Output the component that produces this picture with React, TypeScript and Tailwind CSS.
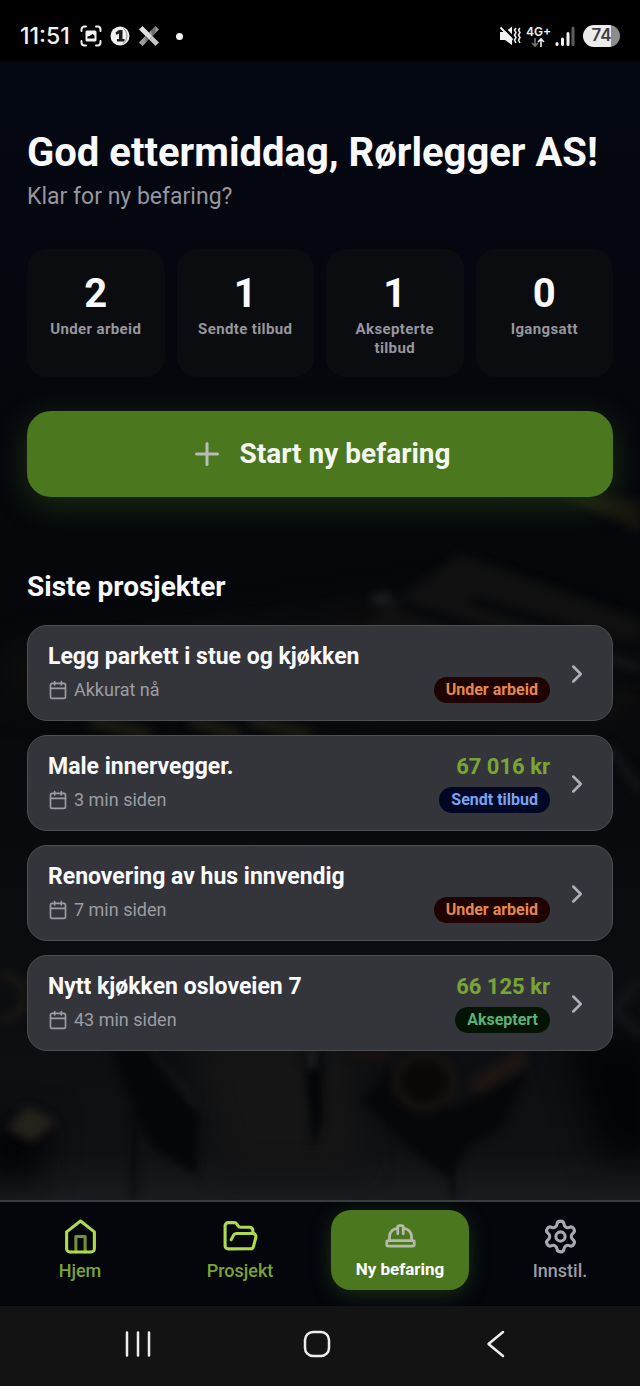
import { Calendar, ChevronRight, FolderOpen, HardHat, Plus, Settings } from "lucide-react";

const stats = [
  { value: 2, label: "Under arbeid" },
  { value: 1, label: "Sendte tilbud" },
  { value: 1, label: "Aksepterte tilbud" },
  { value: 0, label: "Igangsatt" },
];

const badges = {
  progress: { text: "Under arbeid", style: "bg-[#1f0303] text-[#e5894b]" },
  sent: { text: "Sendt tilbud", style: "bg-[#020824] text-[#78a4f4]" },
  accepted: { text: "Akseptert", style: "bg-[#031405] text-[#5cb176]" },
};

const projects = [
  { title: "Legg parkett i stue og kjøkken", time: "Akkurat nå", price: "", badge: badges.progress },
  { title: "Male innervegger.", time: "3 min siden", price: "67 016 kr", badge: badges.sent },
  { title: "Renovering av hus innvendig", time: "7 min siden", price: "", badge: badges.progress },
  { title: "Nytt kjøkken osloveien 7", time: "43 min siden", price: "66 125 kr", badge: badges.accepted },
];

function StatusBar() {
  return (
    <div className="flex h-[62px] items-center justify-between bg-black pt-[10px] pr-5 pl-5 text-[#f2f2f2]">
      <div className="flex items-center gap-2">
        <span className="mr-0.5 font-[Inter] text-[23px] leading-6 font-medium">11:51</span>
        <svg className="size-[22px]" viewBox="0 0 22 22" fill="none" stroke="currentColor" strokeWidth="2" strokeLinecap="round">
          <path d="M1.5 6V4.5a3 3 0 0 1 3-3H6M16 1.5h1.5a3 3 0 0 1 3 3V6M20.5 16v1.5a3 3 0 0 1-3 3H16M6 20.5H4.5a3 3 0 0 1-3-3V16" />
          <rect x="5.500" y="5.500" width="11" height="11" rx="1.500" fill="currentColor" stroke="none" />
          <path d="M7.500 13.500v-2l2-.5 3-2 2 1.500v3z" fill="#000" stroke="none" />
        </svg>
        <svg className="size-5" viewBox="0 0 20 20">
          <circle cx="10" cy="10" r="9.500" fill="#f2f2f2" />
          <path d="M5.500 6.500 9 4h3.500v9h2v2.500H7V13h2V7.500L6.500 9z" fill="#1c1c1c" />
          <path d="M13.500 2.500c5 4 4.500 12-1 15.500" fill="none" stroke="#8a8a8a" strokeWidth="1" />
        </svg>
        <svg className="size-[22px]" viewBox="0 0 22 22">
          <path d="M1 4.500 4.500 1 14.500 11 11 14.500z" fill="#e0e0e0" />
          <path d="M17.500 1 21 4.500 14.500 11 11 7.500z" fill="#9c9c9c" />
          <path d="M13 5.500 17.500 1v7l-3 3z" fill="#6e6e6e" />
          <path d="M7.500 11 11 14.500 4.500 21 1 17.500z" fill="#707070" />
          <path d="m1 17.500 6.500-6.500v7l-3 3z" fill="#9a9a9a" />
          <path d="M14.500 11 21 17.500 17.500 21 11 14.500z" fill="#c4c4c4" />
        </svg>
        <span className="ml-2 size-[7px] rounded-full bg-[#f2f2f2]" />
      </div>

      <div className="flex items-center gap-1">
        <svg className="h-[22px] w-6" viewBox="0 0 24 22" fill="none" stroke="currentColor">
          <path d="M2 7h5l7-5.500v18.500L7 15H2z" fill="currentColor" stroke="none" />
          <path d="M4 1 16 13" stroke="#000" strokeWidth="2.500" />
          <path d="m2.500 2.500 12 12.500" strokeWidth="2" />
          <path d="m18 3-1.500 2L18 7.500 16.500 10l1.500 2.500-1.500 2.500 1.500 3M22 3l-1.500 2L22 7.500 20.500 10l1.500 2.500-1.500 2.500 1.500 3" strokeWidth="1.500" />
        </svg>
        <div className="flex flex-col items-center">
          <span className="font-[Inter] text-[12px] leading-3 font-semibold">4G+</span>
          <svg className="h-[9px] w-4" viewBox="0 0 16 9" fill="none" strokeWidth="1.600">
            <path d="M5 0v8M2 5l3 3 3-3" stroke="#777" />
            <path d="M11 9V1M8 4l3-3 3 3" stroke="#f2f2f2" />
          </svg>
        </div>
        <svg className="h-5 w-5" viewBox="0 0 20 20" strokeWidth="3" strokeLinecap="round">
          <path d="M2 17.500v1M7.500 13v5.500M13 7.500v11" stroke="#f2f2f2" />
          <path d="M18 2v16.500" stroke="#5d5d5d" />
        </svg>
        <span className="ml-1 flex h-[22px] w-[37px] items-center justify-center rounded-full bg-linear-to-r from-[#ececec] from-75% to-[#8c8c8c] to-75% font-[Inter] text-[17px] font-semibold text-[#3f3f3f]">
          74
        </span>
      </div>
    </div>
  );
}

// Dimmed workbench with tools behind the page content
function Workbench() {
  return (
    <svg className="absolute inset-0 size-full" viewBox="0 62 640 1138" preserveAspectRatio="xMidYMid slice" aria-hidden="true">
      <defs>
        <linearGradient id="wall" x1="0" y1="0" x2="0" y2="1">
          <stop offset="0" stopColor="#040812" />
          <stop offset="0.25" stopColor="#05070e" />
          <stop offset="0.5" stopColor="#06070a" />
          <stop offset="0.86" stopColor="#0d0e11" />
          <stop offset="0.96" stopColor="#101114" />
          <stop offset="1" stopColor="#1a1b1e" />
        </linearGradient>
        <filter id="soft" x="-20%" y="-20%" width="140%" height="140%" colorInterpolationFilters="sRGB">
          <feGaussianBlur stdDeviation="4" />
        </filter>
        <filter id="wide" x="-40%" y="-40%" width="180%" height="180%" colorInterpolationFilters="sRGB">
          <feGaussianBlur stdDeviation="16" />
        </filter>
      </defs>
      <rect y="62" width="640" height="1138" fill="url(#wall)" />
      <g filter="url(#wide)">
        <path d="M0 650 260 620 470 590 640 640V730L0 700z" fill="#0d0d0d" />
        <path d="M190 1040h160l10 130H230z" fill="#151515" />
        <path d="M565 1040h95v120h-60z" fill="#030406" />
        <path d="M-20 1120h70l-10 60h-60z" fill="#030406" />
      </g>
      <g filter="url(#soft)">
        <path d="M560 495 640 500v32z" fill="#17160f" />
        <path d="M370 620 460 553 640 620V640H370z" fill="#101010" />
        <ellipse cx="382" cy="599" rx="11" ry="6" fill="#1d201f" />
        <path d="M400 605 640 680M470 600 640 650" stroke="#07080b" strokeWidth="10" />
        <path d="M90 720 150 735M190 720 240 735M250 720 310 735" stroke="#1b1a13" strokeWidth="12" />
        <path d="M610 660 640 668M608 745 640 790M615 1010 640 980M615 1010 640 1035" stroke="#15161a" strokeWidth="8" />
        <path d="M0 975q26 2 24 24 0 18-24 20" fill="none" stroke="#171613" strokeWidth="10" />
        <path d="M110 1050h50l40 65-4 60-46-30z" fill="#050609" />
        <path d="M152 1050 196 1108" stroke="#1c1d1f" strokeWidth="4" />
        <path d="M303 1050h20v70l-10 30z" fill="#050609" />
        <path d="M312 1050v18" stroke="#2c2d2f" strokeWidth="6" />
        <path d="M360 1100 390 1070 450 1110 530 1070 500 1130 470 1145 450 1180 400 1140z" fill="#060709" />
        <ellipse cx="424" cy="1082" rx="28" ry="26" fill="#0a0707" stroke="#171310" strokeWidth="8" />
        <path d="M480 1084 518 1060" stroke="#1d1613" strokeWidth="18" strokeLinecap="round" />
        <path d="M355 1055h35" stroke="#1d1210" strokeWidth="8" />
        <path d="M28 1106 56 1122 32 1142 6 1128z" fill="#25221c" />
        <path d="M134 1110v90M450 1140l4 60" stroke="#07080a" strokeWidth="5" />
      </g>
    </svg>
  );
}

function HomeIcon() {
  return (
    <svg className="size-[37px]" viewBox="0 0 24 24" fill="none" stroke="currentColor" strokeWidth="2" strokeLinecap="round" strokeLinejoin="round">
      <path d="M9 22V12h6v10" opacity="0.65" />
      <path d="m3 9 9-7 9 7v11a2 2 0 0 1-2 2H5a2 2 0 0 1-2-2z" />
    </svg>
  );
}

export default function App() {
  return (
    <div className="flex min-h-screen flex-col bg-black font-[Roboto,sans-serif]">
      <StatusBar />

      <main className="relative flex-1 overflow-hidden">
        <Workbench />
        <div className="relative px-[27px] pt-[66px] pb-8">
          <h1 className="text-[40px] leading-[50px] font-bold text-[#fafafc]">God ettermiddag, Rørlegger AS!</h1>
          <p className="mt-1 text-[23px] leading-[30px] text-[#96969d]">Klar for ny befaring?</p>

          <div className="mt-[37px] grid grid-cols-4 gap-3">
            {stats.map((stat) => (
              <div key={stat.label} className="rounded-[20px] bg-[#0b0c0f] px-4 pt-[21px] pb-[19px] text-center">
                <div className="text-[40px] leading-[48px] font-bold text-[#fafafc]">{stat.value}</div>
                <div className="mt-0.5 text-[15px] leading-[19px] font-bold tracking-wide text-[#96969d]">{stat.label}</div>
              </div>
            ))}
          </div>

          <button className="mt-[34px] flex h-[86px] w-full items-center justify-center gap-[14px] rounded-3xl bg-[#4b771f] text-[28px] font-bold text-[#f4f7f0] shadow-[0_8px_32px_rgba(75,119,31,0.35)]">
            <Plus className="size-9 text-[#b9bcb6]" />
            Start ny befaring
          </button>

          <h2 className="mt-[72px] text-[28px] leading-9 font-bold text-[#fafafc]">Siste prosjekter</h2>
          <div className="mt-5 flex flex-col gap-[14px]">
            {projects.map((project) => (
              <button
                key={project.title}
                className="flex items-center rounded-[20px] border border-[#4e4f54] bg-[#34353a] px-5 pt-[15px] pb-[14px] text-left"
              >
                <span className="flex flex-1 flex-col gap-px">
                  <span className="text-[23px] leading-8 font-bold text-[#fafafc]">{project.title}</span>
                  <span className="flex items-center gap-[6px] text-[18px] leading-8 text-[#9c9ca4]">
                    <Calendar className="size-5" />
                    {project.time}
                  </span>
                </span>
                <span className="flex flex-col items-end gap-px">
                  <span className="h-8 text-[22px] leading-8 font-bold text-[#7aa536]">{project.price}</span>
                  <span className="flex h-8 items-center">
                    <span className={`rounded-full px-3 text-[16px] leading-[26px] font-bold ${project.badge.style}`}>
                      {project.badge.text}
                    </span>
                  </span>
                </span>
                <ChevronRight className="ml-3 size-[30px] text-[#b0b0b8]" />
              </button>
            ))}
          </div>
        </div>
      </main>

      <nav className="grid grid-cols-4 border-t-2 border-[#3b3c40] bg-[#04060c] pt-2 pb-4 text-[18px] leading-6 font-medium">
        <a href="#hjem" className="flex h-20 flex-col items-center justify-center gap-1 text-[#7aa536]">
          <span className="text-[#afd94e]">
            <HomeIcon />
          </span>
          Hjem
        </a>
        <a href="#prosjekt" className="flex h-20 flex-col items-center justify-center gap-1 text-[#7aa536]">
          <FolderOpen className="size-[37px] text-[#afd94e]" />
          Prosjekt
        </a>
        <a
          href="#befaring"
          className="mx-[11px] flex h-20 flex-col items-center justify-center gap-1 rounded-[20px] bg-[#4b771f] text-[17px] font-bold text-white shadow-[0_4px_20px_rgba(75,119,31,0.35)]"
        >
          <HardHat className="size-[33px] text-[#b4bba9]" />
          Ny befaring
        </a>
        <a href="#innstillinger" className="flex h-20 flex-col items-center justify-center gap-1 text-[#9c9ca4]">
          <Settings className="size-[37px] text-[#a9a9b1]" />
          Innstil.
        </a>
      </nav>

      <div className="grid h-20 grid-cols-3 place-items-center bg-[#131314] pr-[54px] pb-1 pl-12 text-[#ededed]">
        <button aria-label="Nylige apper">
          <svg className="size-7" viewBox="0 0 28 28" fill="none" stroke="currentColor" strokeWidth="2.500" strokeLinecap="round">
            <path d="M3 2.500v23M14 2.500v23M25 2.500v23" />
          </svg>
        </button>
        <button aria-label="Hjem-knapp">
          <svg className="size-7" viewBox="0 0 28 28" fill="none" stroke="currentColor" strokeWidth="2.500">
            <rect x="2" y="2" width="24" height="24" rx="8" />
          </svg>
        </button>
        <button aria-label="Tilbake">
          <svg className="size-7" viewBox="0 0 28 28" fill="none" stroke="currentColor" strokeWidth="2.500" strokeLinecap="round" strokeLinejoin="round">
            <path d="M21 2 6.500 14 21 26" />
          </svg>
        </button>
      </div>
    </div>
  );
}
